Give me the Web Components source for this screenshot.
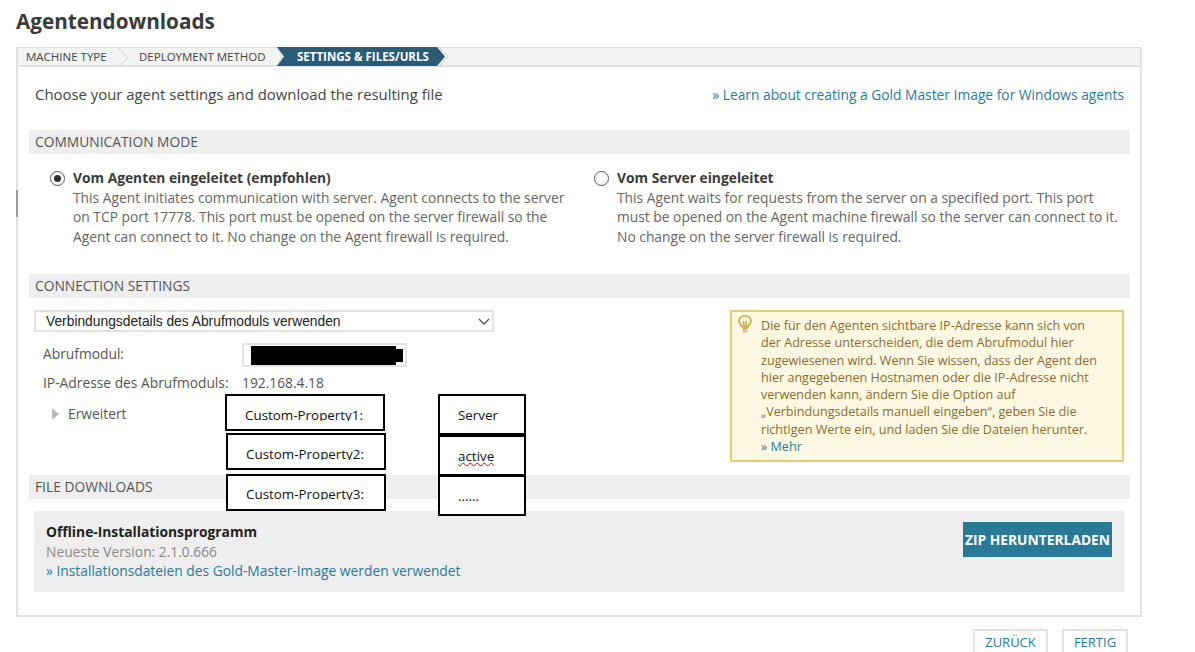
<!DOCTYPE html>
<html lang="de">
<head>
<meta charset="utf-8">
<title>Agentendownloads</title>
<style>
html,body{margin:0;padding:0;background:#fff;}
body{font-family:"Open Sans",sans-serif;color:#444;width:1195px;height:652px;overflow:hidden;position:relative;}
.modes{display:grid;grid-template-columns:544px 1fr;padding:14px 0 0 21px;height:120px;box-sizing:border-box;}
</style>
</head>
<body>
<agent-page>
  <wizard-steps slot="steps"></wizard-steps>
  <section-bar>COMMUNICATION MODE</section-bar>
  <div class="modes">
    <radio-option checked title-text="Vom Agenten eingeleitet (empfohlen)">This Agent initiates communication with server. Agent connects to the server<br>on TCP port 17778. This port must be opened on the server firewall so the<br>Agent can connect to it. No change on the Agent firewall is required.</radio-option>
    <radio-option title-text="Vom Server eingeleitet">This Agent waits for requests from the server on a specified port. This port<br>must be opened on the Agent machine firewall so the server can connect to it.<br>No change on the server firewall is required.</radio-option>
  </div>
  <section-bar>CONNECTION SETTINGS</section-bar>
  <connection-form></connection-form>
  <section-bar>FILE DOWNLOADS</section-bar>
  <download-box></download-box>
</agent-page>
<prop-box style="left:225px;top:394px;width:160px;height:37px" clip>Custom-Property1:</prop-box>
<prop-box style="left:226px;top:433px;width:160px;height:37px" clip>Custom-Property2:</prop-box>
<prop-box style="left:226px;top:474px;width:160px;height:37px;padding-top:10px" clip>Custom-Property3:</prop-box>
<prop-box style="left:438px;top:394px;width:88px;height:41px">Server</prop-box>
<prop-box style="left:438px;top:435px;width:88px;height:41px" squiggle>active</prop-box>
<prop-box style="left:438px;top:475px;width:88px;height:41px">......</prop-box>
<script>
class AgentPage extends HTMLElement{
    connectedCallback(){
        let root=this.attachShadow({mode:"open"});
        root.innerHTML=`
        <style>
        :host{display:block;padding:9px 53px 0 16px;}
        h1{margin:0 0 13px;font-size:20.7px;line-height:25px;font-weight:700;color:#3a3a3a;}
        .panel{border:2px solid #e2e2e2;border-top:1px solid #ddd;height:570px;box-sizing:border-box;position:relative;}
        .tick{position:absolute;left:-2px;top:142px;width:2px;height:27px;background:#999;}
        .body{padding:0 10px 0 11px;}
        .intro{display:flex;justify-content:space-between;padding:17px 6px 0 6px;height:63px;box-sizing:border-box;font-size:14.9px;line-height:20px;white-space:nowrap;}
        .intro a{color:#2a7a9b;text-decoration:none;font-size:13.8px;padding-top:1px;}
        .actions{display:flex;justify-content:flex-end;gap:14px;padding:12px 14px 0 0;}
        </style>
        <h1>Agentendownloads</h1>
        <div class="panel">
          <div class="tick"></div>
          <slot name="steps"></slot>
          <div class="body">
            <div class="intro"><span>Choose your agent settings and download the resulting file</span><a href="#">» Learn about creating a Gold Master Image for Windows agents</a></div>
            <slot></slot>
          </div>
        </div>
        <div class="actions"><wiz-button style="width:75px">ZURÜCK</wiz-button><wiz-button style="width:66px">FERTIG</wiz-button></div>
        `;
    }
}
class WizardSteps extends HTMLElement{
    connectedCallback(){
        let root=this.attachShadow({mode:"open"});
        root.innerHTML=`
        <style>
        :host{display:flex;align-items:stretch;height:17px;background:#f3f3f3;border-bottom:2px solid #e2e2e2;font-size:11.5px;color:#444;}
        span{display:flex;align-items:center;white-space:nowrap;}
        .a{padding:0 0 1px 8px;width:91px;}
        .b{padding:0 0 1px 10px;width:138px;}
        .c{width:168px;height:19px;margin-top:-1px;padding:0 0 0 20px;box-sizing:border-box;background:#2a5c78;color:#fff;font-weight:700;clip-path:polygon(0 0,calc(100% - 8px) 0,100% 50%,calc(100% - 8px) 100%,0 100%,7px 50%);}
        svg{flex:none;width:12px;height:19px;}
        </style>
        <span class="a">MACHINE TYPE</span>
        <svg viewBox="0 0 12 19"><path d="M1 0l10 9.5L1 19" fill="none" stroke="#d8d8d8"/></svg>
        <span class="b">DEPLOYMENT METHOD</span>
        <svg viewBox="0 0 12 19" style="margin:-1px -12px 0 0"><path d="M0 0l5 9.5L0 19" fill="none" stroke="#ccc"/></svg>
        <span class="c">SETTINGS &amp; FILES/URLS</span>
        <svg viewBox="0 0 12 19" style="margin:-1px 0 0 -7px"><path d="M1 0l9 9.5L1 19" fill="none" stroke="#ccc"/></svg>
        `;
    }
}
class SectionBar extends HTMLElement{
    connectedCallback(){
        let root=this.attachShadow({mode:"open"});
        root.innerHTML=`
        <style>
        :host{display:block;height:24px;line-height:24px;background:#eee;padding-left:6px;font-size:13.8px;color:#555;}
        </style>
        <slot></slot>
        `;
    }
}
class RadioOption extends HTMLElement{
    connectedCallback(){
        let root=this.attachShadow({mode:"open"});
        let on=this.hasAttribute("checked");
        root.innerHTML=`
        <style>
        :host{display:flex;gap:8px;font-size:13.8px;line-height:19.5px;color:#666;white-space:nowrap;}
        svg{flex:none;width:15px;height:15px;margin-top:3px;}
        b{display:block;color:#3a3a3a;font-weight:700;}
        </style>
        <svg viewBox="0 0 15 15"><circle cx="7.5" cy="7.5" r="7" fill="#fff" stroke="#555"/>${on?'<circle cx="7.5" cy="7.5" r="3.5" fill="#333"/>':''}</svg>
        <div><b>${this.getAttribute("title-text")}</b><slot></slot></div>
        `;
    }
}
class ConnectionForm extends HTMLElement{
    connectedCallback(){
        let root=this.attachShadow({mode:"open"});
        root.innerHTML=`
        <style>
        :host{display:flex;justify-content:space-between;height:177px;padding:12px 6px 0 5px;box-sizing:border-box;font-size:13.8px;color:#555;}
        .left{width:460px;}
        .pick{position:relative;height:22px;}
        select{display:block;appearance:none;width:460px;height:22px;font:13.8px "Liberation Sans",sans-serif;color:#222;background:#fff;border:2px solid #e2e2e2;border-radius:0;padding:0 0 0 10px;}
        .pick svg{position:absolute;left:444px;top:8px;width:12px;height:7px;}
        .row{display:flex;align-items:center;padding-left:9px;white-space:nowrap;}
        .row label{width:199px;flex:none;}
        .field{width:165px;height:24px;box-sizing:border-box;border:2px solid #e4e4e4;display:flex;align-items:center;padding-left:7px;}
        .redact{display:block;width:145px;height:19px;background:#000;position:relative;}
        .redact::after{content:"";position:absolute;left:100%;top:3px;width:7px;height:13px;background:#000;}
        .adv{display:flex;align-items:center;gap:9px;padding:11px 0 0 18px;}
        .adv svg{width:7px;height:12px;flex:none;}
        </style>
        <div class="left">
          <div class="pick">
            <select><option>Verbindungsdetails des Abrufmoduls verwenden</option></select>
            <svg viewBox="0 0 12 7"><path d="M1 1l5 5 5-5" fill="none" stroke="#555" stroke-width="1.4"/></svg>
          </div>
          <div class="row" style="margin-top:11px"><label style="margin-bottom:3px">Abrufmodul:</label><span class="field"><span class="redact"></span></span></div>
          <div class="row" style="margin-top:6px;line-height:20px"><label>IP-Adresse des Abrufmoduls:</label><span>192.168.4.18</span></div>
          <div class="adv"><svg viewBox="0 0 7 12"><path d="M0 0l7 6-7 6z" fill="#bbb"/></svg><span>Erweitert</span></div>
        </div>
        <hint-box>Die für den Agenten sichtbare IP-Adresse kann sich von<br>der Adresse unterscheiden, die dem Abrufmodul hier<br>zugewiesenen wird. Wenn Sie wissen, dass der Agent den<br>hier angegebenen Hostnamen oder die IP-Adresse nicht<br>verwenden kann, ändern Sie die Option auf<br>„Verbindungsdetails manuell eingeben“, geben Sie die<br>richtigen Werte ein, und laden Sie die Dateien herunter.<br><a href="#" style="color:#2a7a9b;text-decoration:none">» Mehr</a></hint-box>
        `;
    }
}
class HintBox extends HTMLElement{
    connectedCallback(){
        let root=this.attachShadow({mode:"open"});
        root.innerHTML=`
        <style>
        :host{display:flex;gap:9px;width:394px;height:152px;box-sizing:border-box;background:#fdf8e2;border:2px solid #e3cd7d;padding:5px 5px 0 6px;font-size:12.6px;line-height:17.3px;color:#8a6d2f;white-space:nowrap;}
        svg{flex:none;width:14px;height:18px;margin-top:-2px;}
        </style>
        <svg viewBox="0 0 14 18" fill="none" stroke="#c9a42c" stroke-width="1.5"><path d="M4.3 12C3.6 9.8 1 8.8 1 5.8a6 5 0 0 1 12 0c0 3-2.6 4-3.3 6.2z"/><path d="M5.5 6l.6 6M8.5 6l-.6 6M4.6 14h4.8M5 16.4h4"/></svg>
        <div><slot></slot></div>
        `;
    }
}
class DownloadBox extends HTMLElement{
    connectedCallback(){
        let root=this.attachShadow({mode:"open"});
        root.innerHTML=`
        <style>
        :host{display:flex;justify-content:space-between;margin:12px 6px 0 5px;height:81px;background:#eee;padding:11px 12px 0 12px;box-sizing:border-box;font-size:13.8px;line-height:19.5px;white-space:nowrap;}
        b{display:block;color:#222;font-weight:700;}
        .ver{display:block;color:#888;}
        a{color:#2a7a9b;text-decoration:none;}
        .zip{width:149px;height:35px;background:#2a7a97;color:#fff;font-weight:700;display:flex;align-items:center;justify-content:center;}
        </style>
        <div><b>Offline-Installationsprogramm</b><span class="ver">Neueste Version: 2.1.0.666</span><a href="#">» Installationsdateien des Gold-Master-Image werden verwendet</a></div>
        <div class="zip">ZIP HERUNTERLADEN</div>
        `;
    }
}
class WizButton extends HTMLElement{
    connectedCallback(){
        let root=this.attachShadow({mode:"open"});
        root.innerHTML=`
        <style>
        :host{display:flex;align-items:center;justify-content:center;height:26px;box-sizing:border-box;border:2px solid #e2e2e2;font-size:13px;color:#2a7a9b;}
        </style>
        <slot></slot>
        `;
    }
}
class PropBox extends HTMLElement{
    connectedCallback(){
        let root=this.attachShadow({mode:"open"});
        let wavy=this.hasAttribute("squiggle");
        let clip=this.hasAttribute("clip");
        root.innerHTML=`
        <style>
        :host{position:absolute;display:block;box-sizing:border-box;background:#fff;border:2px solid #000;overflow:hidden;font-family:"Open Sans",sans-serif;font-size:13.4px;color:#111;white-space:nowrap;line-height:16px;padding:11px 0 0 18px;}
        span{${wavy?"text-decoration:underline wavy #c00;text-decoration-thickness:1px;":""}${clip?"display:inline-block;height:14px;overflow:hidden;":""}}
        </style>
        <span><slot></slot></span>
        `;
    }
}
customElements.define("agent-page",AgentPage);
customElements.define("wizard-steps",WizardSteps);
customElements.define("section-bar",SectionBar);
customElements.define("radio-option",RadioOption);
customElements.define("connection-form",ConnectionForm);
customElements.define("hint-box",HintBox);
customElements.define("download-box",DownloadBox);
customElements.define("wiz-button",WizButton);
customElements.define("prop-box",PropBox);
</script>
</body>
</html>
